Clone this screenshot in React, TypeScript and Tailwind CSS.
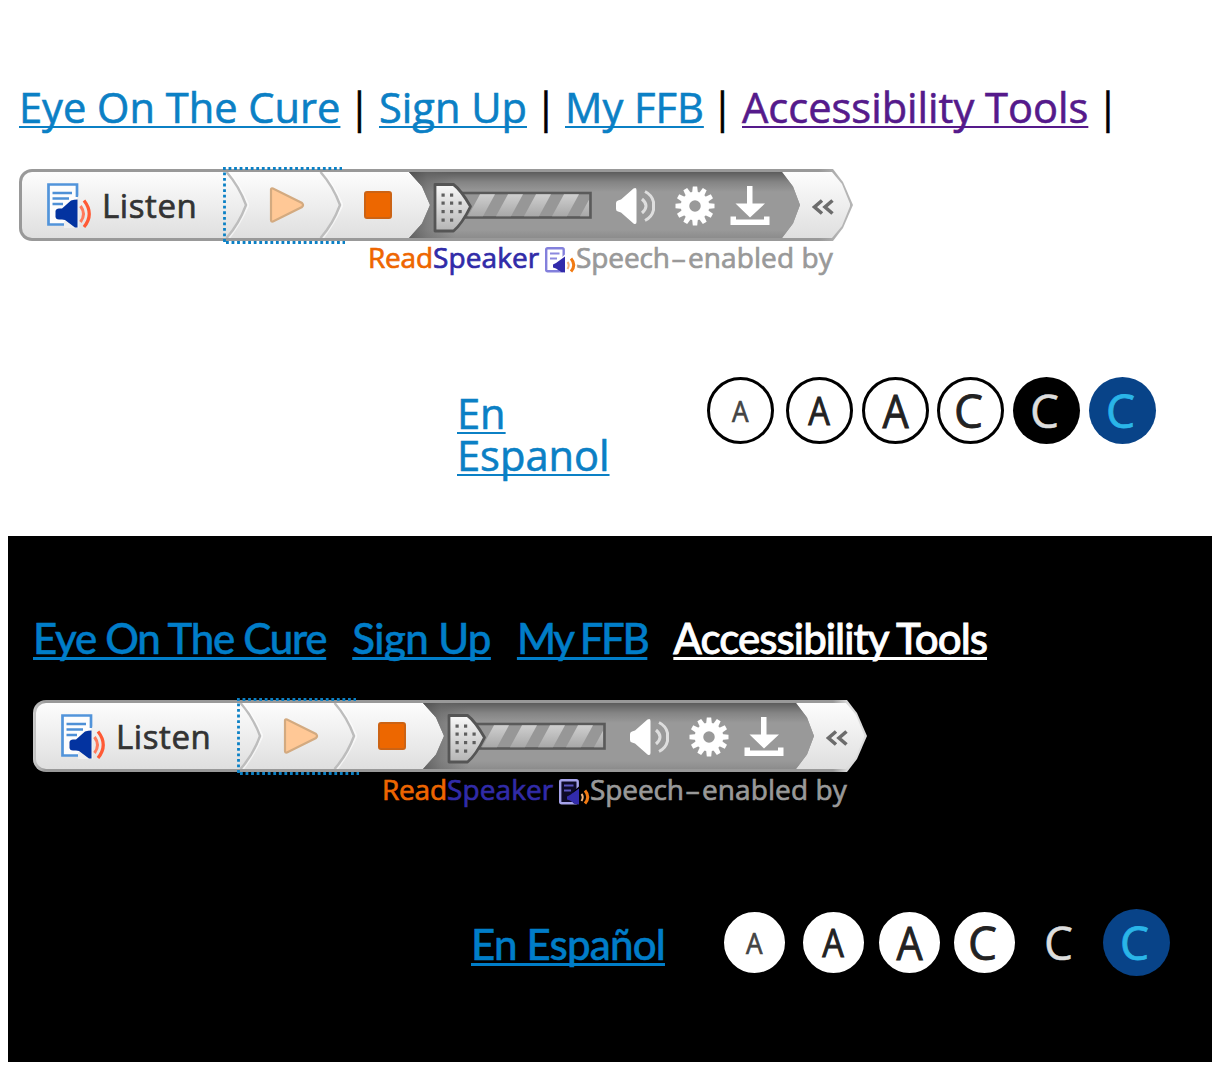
import type { ReactNode } from "react";

const stripes = [46, 74, 102, 130, 158];

function Chevron() {
  return (
    <svg className="absolute left-0 top-0" width="24" height="66" viewBox="0 0 24 66" fill="none">
      <path d="M4 0Q15 14 23.5 33Q15 52 4 66" stroke="#fff" strokeWidth="2" opacity=".6" />
      <path d="M1.5 0Q14 14 21 33Q14 52 1.5 66" stroke="#bdbdbd" strokeWidth="2.4" />
    </svg>
  );
}

function ListenIcon() {
  return (
    <svg width="46" height="45" viewBox="0 0 46 45" fill="none">
      <rect x="1.500" y="1.500" width="28.500" height="40" fill="#fdfdfd" />
      <path d="M30 14V1.500H1.500V41.500H17" stroke="#5294da" strokeWidth="2.700" />
      <path d="M23 30L32 12V45H17V39Z" fill="#efefef" />
      <path d="M5.500 10H25M5.500 15.500H22M5.500 21H16" stroke="#4e90d6" strokeWidth="2.500" />
      <path d="M8.500 28Q9 25.500 12 25.500H15L24 17.500Q27 16.500 30.500 16.500V44.500H28L18 37L15 36.500H12Q9 36.500 8.500 34Z" fill="#0333a0" />
      <path d="M33.500 23Q39.500 31 33.500 39" stroke="#ff7a5c" strokeWidth="3" />
      <path d="M37 17.500Q47.500 31 37 44" stroke="#ff5a35" strokeWidth="3.200" />
    </svg>
  );
}

function Slider({ id }: { id: string }) {
  return (
    <svg width="163" height="56" viewBox="0 0 163 56">
      <defs>
        <linearGradient id={id} x1="0" y1="0" x2="0" y2="1">
          <stop offset="0" stopColor="#fafafa" />
          <stop offset="1" stopColor="#b4b4b4" />
        </linearGradient>
        <linearGradient id={id + "s"} x1="0" y1="0" x2="0" y2="1">
          <stop offset="0" stopColor="#cfcfcf" />
          <stop offset="1" stopColor="#a8a8a8" />
        </linearGradient>
        <clipPath id={id + "c"}>
          <rect x="31" y="14" width="127" height="23" />
        </clipPath>
      </defs>
      <rect x="29" y="13" width="130.500" height="24.500" fill="#979797" stroke="#5a5a5a" strokeWidth="2.600" />
      <g clipPath={`url(#${id}c)`}>
        {stripes.map((x) => (
          <path key={x} d={`M${x + 3} 14.300h15l-12 22h-15z`} fill={`url(#${id}s)`} />
        ))}
      </g>
      <path d="M4 4.500H22.500Q30 10 39.500 26.500Q31 44 22.500 51H4Z" fill={`url(#${id})`} stroke="#555" strokeWidth="2.800" strokeLinejoin="round" />
      <g fill="#5f5f5f">
        {[[11, 15], [19.500, 15], [11, 23], [19.500, 23], [28, 23], [11, 31.500], [19.500, 31.500], [28, 31.500], [11, 40], [19.500, 40]].map(([x, y]) => (
          <rect key={`${x}-${y}`} x={x - 0.5} y={y - 1.500} width="3.200" height="3.200" />
        ))}
      </g>
    </svg>
  );
}

function VolumeIcon() {
  return (
    <svg width="41" height="40" viewBox="0 0 41 40" fill="none">
      <path d="M0 16Q0 14 2 13.500L5 12.500L17.500 1.500Q20.500 0 20.500 3V35Q20.500 38 17.500 36.500L5 25.500L2 24.500Q0 24 0 22Z" fill="#fff" />
      <path d="M26 12Q34 19 26 26" stroke="#dedede" strokeWidth="3" />
      <path d="M29 4.500Q36 8 37.500 15V23Q36 30 29 33.500" stroke="#dedede" strokeWidth="3" />
    </svg>
  );
}

const teeth = [0, 30, 60, 90, 120, 150, 180, 210, 240, 270, 300, 330];

function GearIcon() {
  return (
    <svg width="40" height="40" viewBox="-20 -20 40 40">
      <circle r="10" fill="none" stroke="#fff" strokeWidth="8.500" />
      {teeth.map((a) => (
        <path key={a} d="M-3 -12L-2.200 -19.500H2.200L3 -12Z" fill="#fff" transform={`rotate(${a})`} />
      ))}
    </svg>
  );
}

function DownloadIcon() {
  return (
    <svg width="40" height="40" viewBox="0 0 40 40" fill="#fff">
      <path d="M17 0H22.500V17.500H35L20 31.500L5.500 17.500H17Z" />
      <path d="M0.500 30.500H6V33.500H34V30.500H39.500V39H0.500Z" />
    </svg>
  );
}

function MiniIcon({ dark }: { dark: boolean }) {
  return (
    <svg className="mt-[6px] shrink-0" width="31" height="26" viewBox="0 0 31 26" fill="none">
      <rect x="1.200" y="1.200" width="17.500" height="23" rx="1.500" fill={dark ? "#0d0a28" : "#fff"} stroke={dark ? "#a5a2ea" : "#8380dc"} strokeWidth="2.400" />
      <path d="M5 6.500H14.500M5 11.500H12" stroke={dark ? "#5a55c0" : "#8b88de"} strokeWidth="2.200" />
      <path d="M14 13L20.500 7V26L14 24Z" fill={dark ? "#000" : "#fff"} />
      <path d="M8 17.500L11 16L20 9.500V25.500L16 25L11 21.500L8 20.500Z" fill="#322bab" />
      <path d="M22.500 15Q25 18 22.500 22" stroke="#f6b57c" strokeWidth="2" />
      <path d="M26 11.500Q31.500 18 26 24.500" stroke="#f27a12" strokeWidth="3" />
    </svg>
  );
}

function Player({ id, dark }: { id: string; dark: boolean }) {
  return (
    <div className="relative h-[72px] w-[834px] font-['Open_Sans',sans-serif]">
      <div
        className={`h-[72px] rounded-l-[13px] p-[3px] [clip-path:polygon(0_0,814px_0,824px_18%,834px_50%,824px_82%,814px_100%,0_100%)] ${
          dark ? "bg-[linear-gradient(to_right,#ccc,#999_12px,#999_800px,#ddd_815px)]" : "bg-[linear-gradient(to_right,#999_800px,#b5b5b5_820px)]"
        }`}
      >
        <div className="flex h-[66px] items-stretch rounded-l-[10px] bg-linear-to-b from-[#fdfdfd] to-[#dfdfdf] [clip-path:polygon(0_0,810px_0,820px_18%,828.5px_50%,820px_82%,810px_100%,0_100%)]">
          <div className="flex w-[203px] items-center pl-[25px]">
            <ListenIcon />
            <span className="ml-[9px] mt-[2px] text-[33px] leading-[40px] tracking-[0.6px] text-[#333] [-webkit-text-stroke:0.7px_#333]">Listen</span>
          </div>
          <div className="relative flex w-[94px] items-center pl-[44px]">
            <Chevron />
            <svg width="36" height="36" viewBox="0 0 36 36">
              <path d="M2 2.500Q2 1 4 1.500L33 16Q35 18 33 20L4 34.500Q2 35 2 33Z" fill="#ffc896" stroke="#d3aa80" strokeWidth="2.200" />
            </svg>
          </div>
          <div className="relative flex w-[90px] items-center pl-[45px]">
            <Chevron />
            <div className="size-[28px] rounded-[3px] border-2 border-[#cc6314] bg-[#ed6700]" />
          </div>
          <div className="flex w-[391px] items-center bg-[#999] bg-[linear-gradient(to_right,#4c4c4cb0_0,#6668_18px,transparent_46px),linear-gradient(to_bottom,#5c5c5c_0,#848484_10px,#999_20px,#999_58px,#8c8c8c_100%)] pl-[22px] [clip-path:polygon(0_0,373px_0,384px_22%,391px_50%,384px_78%,373px_100%,0_100%,13px_78%,21px_50%,13px_22%)]">
            <div className="mt-[5px]">
              <Slider id={id} />
            </div>
            <div className="ml-[22px] mt-[4px]"><VolumeIcon /></div>
            <div className="ml-[18px] mt-px"><GearIcon /></div>
            <div className="ml-[15px] mt-[2px]"><DownloadIcon /></div>
          </div>
          <div className="flex items-center pl-[10px]">
            <svg className="mt-[3px]" width="24" height="18" viewBox="0 0 24 18" fill="none" stroke="#6c6c6c" strokeWidth="3.600">
              <path d="M12 2.500L4.500 9L12 15.500M22.500 2.500L15 9L22.500 15.500" />
            </svg>
          </div>
        </div>
      </div>
      <svg className="absolute left-[204px] top-[-2px]" width="124" height="80" viewBox="0 0 124 80" fill="none" stroke="#0b80c5" strokeWidth="2.800">
        <path d="M0 1.500H119M1.500 5.500V76M3 75.500H122" strokeDasharray="2.800 2.750" />
      </svg>
      <div className={`flex h-[32px] pl-[349px] text-[28px] leading-[33px] [-webkit-text-stroke:0.7px_currentColor] ${dark ? "pt-px" : ""}`}>
        <span className="w-[65px] tracking-[-0.2px] text-[#ee6600]">Read</span>
        <span className="w-[112px] tracking-[0.1px] text-[#312ba8]">Speaker</span>
        <MiniIcon dark={dark} />
        <span className="whitespace-nowrap text-[#999]">
          <span className="tracking-[-0.1px]">Speech</span>
          <span className="inline-block w-[18px] origin-left translate-x-px scale-x-[1.7]">-</span>
          <span className="tracking-[0.1px]">enabled by</span>
        </span>
      </div>
    </div>
  );
}

function Round({ look, children }: { look: string; children: ReactNode }) {
  return <div className={`flex size-[67px] items-center justify-center rounded-full ${look}`}>{children}</div>;
}

function Options() {
  return (
    <div className="flex font-['Open_Sans',sans-serif] text-[#222]">
      <Round look="mr-[12px] border-3 border-black bg-white text-[29px] text-[#444] [-webkit-text-stroke:0.7px_#444]"><span className="scale-x-90">A</span></Round>
      <Round look="mr-[9px] border-3 border-black bg-white text-[38px] [-webkit-text-stroke:0.9px_#222]"><span className="scale-x-90">A</span></Round>
      <Round look="mr-[8px] border-3 border-black bg-white text-[46px] [-webkit-text-stroke:0.9px_#222]"><span className="scale-x-90">A</span></Round>
      <Round look="mr-[9px] border-3 border-black bg-white pr-[4px] text-[46px] [-webkit-text-stroke:0.8px_#222]">C</Round>
      <Round look="mr-[9px] bg-black pr-[4px] text-[46px] text-[#ddd] [-webkit-text-stroke:0.5px_#ddd]">C</Round>
      <Round look="bg-[#084388] pr-[4px] text-[46px] text-[#2ab5e8] [-webkit-text-stroke:0.8px_#2ab5e8]">C</Round>
    </div>
  );
}

const link = "underline underline-offset-[3px] [text-decoration-skip-ink:none] whitespace-nowrap";
const bar = "text-center text-black [-webkit-text-stroke:0.5px_#000]";

export default function App() {
  return (
    <div className="h-[1080px] w-[1226px] overflow-hidden bg-white">
      <section className="h-[536px] pl-[19px] pt-[86px]">
        <nav className="flex h-[42px] font-['Open_Sans',sans-serif] text-[41.6px] leading-[42px] text-[#0b80c5] [-webkit-text-stroke:0.6px_currentColor]">
          <a className={`${link} w-[322px] decoration-[1.5px]`}>Eye On The Cure</a>
          <span className={`${bar} w-[37px]`}>|</span>
          <a className={`${link} ml-px w-[148px] decoration-[1.5px]`}>Sign Up</a>
          <span className={`${bar} w-[38px]`}>|</span>
          <a className={`${link} w-[138px] decoration-[1.5px]`}>My FFB</a>
          <span className={`${bar} w-[39px]`}>|</span>
          <a className={`${link} w-[347px] text-[#551a8b] decoration-[1.5px]`}>Accessibility Tools</a>
          <span className={`${bar} w-[38px]`}>|</span>
        </nav>
        <div className="mt-[41px]"><Player id="knob-light" dark={false} /></div>
        <div className="mt-[136px] flex">
          <div className="ml-[438px] mt-[15px] flex w-[250px] flex-col font-['Open_Sans',sans-serif] text-[41.6px] leading-[42px] text-[#0b80c5] [-webkit-text-stroke:0.6px_currentColor]">
            <a className={`${link} decoration-[1.5px]`}>En</a>
            <a className={`${link} decoration-[1.5px]`}>Espanol</a>
          </div>
          <Options />
        </div>
      </section>
      <section className="ml-[8px] h-[526px] w-[1204px] bg-black pl-[25px] pt-[81px]">
        <nav className="flex h-[42px] font-['Lato',sans-serif] text-[42px] font-medium leading-[42px] text-[#007dc8] [-webkit-text-stroke:0.5px_currentColor]">
          <a className={`${link} mr-[26px] tracking-[-1.28px] decoration-3`}>Eye On The Cure</a>
          <a className={`${link} mr-[26px] tracking-[-0.6px] decoration-3`}>Sign Up</a>
          <a className={`${link} mr-[26px] tracking-[-2.4px] decoration-3`}>My FFB</a>
          <a className={`${link} tracking-[-0.95px] text-white decoration-3 [-webkit-text-stroke:0.8px_#fff]`}>Accessibility Tools</a>
        </nav>
        <div className="mt-[41px]"><Player id="knob-dark" dark /></div>
        <div className="mt-[137px] flex">
          <a className={`${link} ml-[438px] mt-[14px] w-[250px] font-['Lato',sans-serif] text-[42px] font-medium leading-[42px] tracking-[-0.8px] text-[#007dc8] decoration-3 [-webkit-text-stroke:0.5px_currentColor]`}>En Español</a>
          <Options />
        </div>
      </section>
    </div>
  );
}
